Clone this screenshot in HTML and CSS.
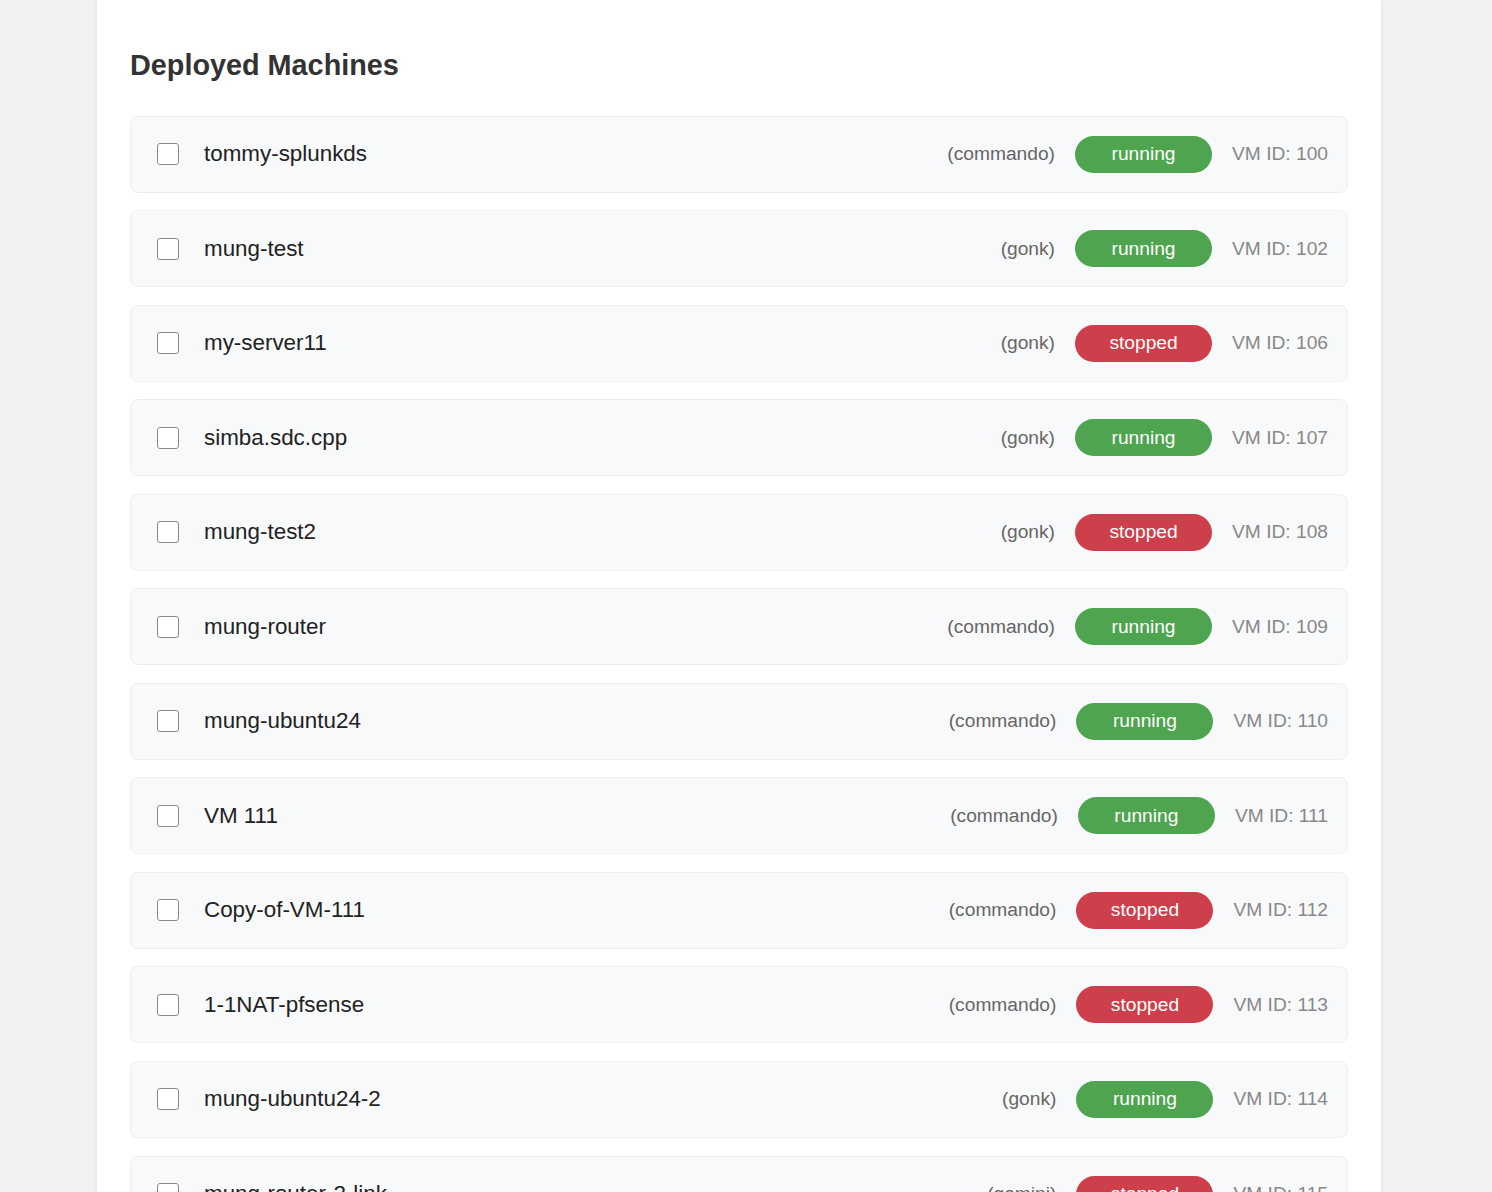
FILE: index.html
```html
<!DOCTYPE html>
<html lang="en">
<head>
  <meta charset="UTF-8">
  <meta name="viewport" content="width=device-width, initial-scale=1.0">
  <title>Deployed Machines</title>
  <link rel="stylesheet" href="styles.css">
</head>
<body>
  <div class="container">
    <h2>Deployed Machines</h2>
    <div class="vm-list">
      <div class="vm-item">
        <input type="checkbox" class="vm-check" />
        <span class="vm-name">tommy-splunkds</span>
        <span class="vm-node">(commando)</span>
        <span class="status running">running</span>
        <span class="vm-id">VM ID: 100</span>
      </div>
      <div class="vm-item">
        <input type="checkbox" class="vm-check" />
        <span class="vm-name">mung-test</span>
        <span class="vm-node">(gonk)</span>
        <span class="status running">running</span>
        <span class="vm-id">VM ID: 102</span>
      </div>
      <div class="vm-item">
        <input type="checkbox" class="vm-check" />
        <span class="vm-name">my-server11</span>
        <span class="vm-node">(gonk)</span>
        <span class="status stopped">stopped</span>
        <span class="vm-id">VM ID: 106</span>
      </div>
      <div class="vm-item">
        <input type="checkbox" class="vm-check" />
        <span class="vm-name">simba.sdc.cpp</span>
        <span class="vm-node">(gonk)</span>
        <span class="status running">running</span>
        <span class="vm-id">VM ID: 107</span>
      </div>
      <div class="vm-item">
        <input type="checkbox" class="vm-check" />
        <span class="vm-name">mung-test2</span>
        <span class="vm-node">(gonk)</span>
        <span class="status stopped">stopped</span>
        <span class="vm-id">VM ID: 108</span>
      </div>
      <div class="vm-item">
        <input type="checkbox" class="vm-check" />
        <span class="vm-name">mung-router</span>
        <span class="vm-node">(commando)</span>
        <span class="status running">running</span>
        <span class="vm-id">VM ID: 109</span>
      </div>
      <div class="vm-item">
        <input type="checkbox" class="vm-check" />
        <span class="vm-name">mung-ubuntu24</span>
        <span class="vm-node">(commando)</span>
        <span class="status running">running</span>
        <span class="vm-id">VM ID: 110</span>
      </div>
      <div class="vm-item">
        <input type="checkbox" class="vm-check" />
        <span class="vm-name">VM 111</span>
        <span class="vm-node">(commando)</span>
        <span class="status running">running</span>
        <span class="vm-id">VM ID: 111</span>
      </div>
      <div class="vm-item">
        <input type="checkbox" class="vm-check" />
        <span class="vm-name">Copy-of-VM-111</span>
        <span class="vm-node">(commando)</span>
        <span class="status stopped">stopped</span>
        <span class="vm-id">VM ID: 112</span>
      </div>
      <div class="vm-item">
        <input type="checkbox" class="vm-check" />
        <span class="vm-name">1-1NAT-pfsense</span>
        <span class="vm-node">(commando)</span>
        <span class="status stopped">stopped</span>
        <span class="vm-id">VM ID: 113</span>
      </div>
      <div class="vm-item">
        <input type="checkbox" class="vm-check" />
        <span class="vm-name">mung-ubuntu24-2</span>
        <span class="vm-node">(gonk)</span>
        <span class="status running">running</span>
        <span class="vm-id">VM ID: 114</span>
      </div>
      <div class="vm-item">
        <input type="checkbox" class="vm-check" />
        <span class="vm-name">mung-router-2-link</span>
        <span class="vm-node">(gemini)</span>
        <span class="status stopped">stopped</span>
        <span class="vm-id">VM ID: 115</span>
      </div>
    </div>
  </div>
</body>
</html>
```

FILE: styles.css
```css
html {
  overflow: hidden;
}
body {
  margin: 0;
  font-family: "Liberation Sans", Arial, sans-serif;
  background-color: #f2f2f2;
  color: #222;
}
.container {
  width: 1284px;
  margin-left: 97px;
  padding: 1px 33px 40px;
  box-sizing: border-box;
  background: #fff;
  box-shadow: 0 0 6px rgba(0, 0, 0, 0.08);
}
h2 {
  font-size: 28.8px;
  color: #333;
  margin: 47.5px 0 34px;
}
.vm-item {
  display: flex;
  align-items: center;
  padding: 19px 19px 19px 26px;
  margin-bottom: 17.55px;
  background: #f8f9fa;
  border: 1px solid #eceef0;
  border-radius: 8px;
  font-size: 19.2px;
}
.vm-check {
  appearance: none;
  width: 22px;
  height: 22px;
  margin: 0 25px 0 0;
  border: 1.5px solid #8a8a8e;
  border-radius: 3px;
  background: #fff;
}
.vm-name {
  font-size: 22.4px;
  color: #222;
  flex: 1;
}
.vm-node {
  color: #666;
  margin-right: 20px;
}
.status {
  width: 137px;
  padding: 7.5px 0;
  line-height: 22px;
  text-align: center;
  color: #fff;
  border-radius: 20px;
  margin-right: 20px;
}
.running {
  background: #4fa450;
}
.stopped {
  background: #cd3f4b;
}
.vm-id {
  color: #888;
}
```
